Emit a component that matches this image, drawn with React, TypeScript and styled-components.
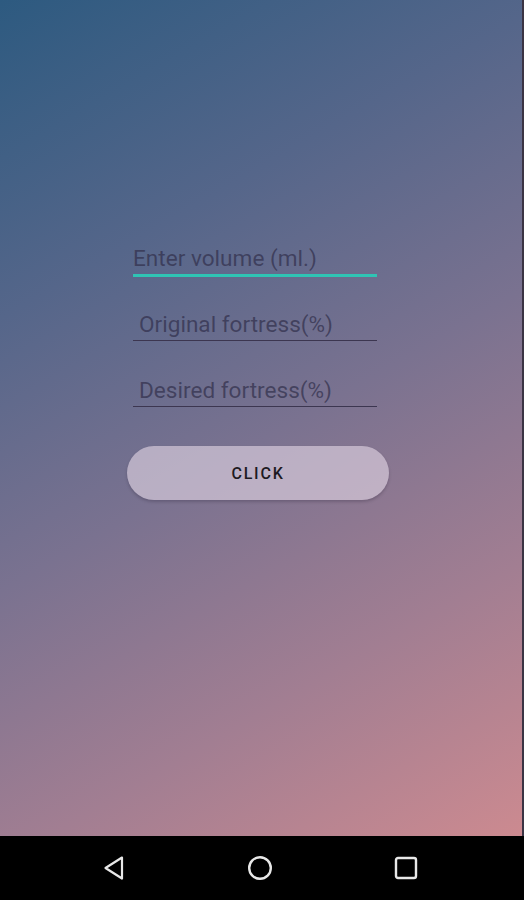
import React from "react";
import styled, { createGlobalStyle } from "styled-components";

const GlobalStyle = createGlobalStyle`
  html, body {
    margin: 0;
    padding: 0;
    height: 100%;
  }
  body {
    font-family: Roboto, "Liberation Sans", sans-serif;
    background: #000;
  }
  #root {
    height: 100%;
  }
`;

const Screen = styled.div`
  width: 524px;
  height: 900px;
  display: flex;
  flex-direction: column;
  overflow: hidden;
`;

const Content = styled.div`
  flex: 1;
  display: flex;
  flex-direction: column;
  align-items: center;
  padding-top: 244px;
  padding-right: 12px;
  background: linear-gradient(
    150deg,
    #2d5a80 0%,
    #55668a 28%,
    #7a7290 52%,
    #a27e92 76%,
    #cc8a90 100%
  );
  border-right: 2px solid #3b3444;
`;

const Form = styled.div`
  width: 244px;
  display: flex;
  flex-direction: column;
`;

const Field = styled.div<{ focused?: boolean }>`
  height: 33px;
  margin-bottom: ${(p) => (p.focused ? 31 : 33)}px;
  display: flex;
  align-items: flex-end;
  border-bottom: ${(p) => (p.focused ? "3px solid #2fc4b4" : "1.5px solid #3c3650")};
  box-sizing: border-box;
`;

const Placeholder = styled.span<{ indent?: number }>`
  font-size: 22.6px;
  line-height: 26px;
  padding-left: ${(p) => p.indent ?? 0}px;
  padding-bottom: 2px;
  color: rgba(50, 48, 76, 0.72);
`;

const ButtonRow = styled.div`
  display: flex;
  justify-content: center;
  margin-top: 6px;
  margin-left: 6px;
`;

const ClickButton = styled.button`
  width: 262px;
  height: 54px;
  border: none;
  border-radius: 27px;
  background: rgba(222, 210, 226, 0.64);
  box-shadow: 0 2px 3px rgba(40, 30, 50, 0.25);
  font-family: Roboto, "Liberation Sans", sans-serif;
  font-size: 16px;
  font-weight: 500;
  letter-spacing: 1.8px;
  color: #1d1a22;
  cursor: pointer;
`;

const NavBar = styled.div`
  height: 64px;
  padding-right: 4px;
  background: #000;
  display: flex;
  align-items: center;
  justify-content: center;
`;

const NavSlot = styled.div`
  width: 146px;
  display: flex;
  justify-content: center;
`;

const App: React.FC = () => {
  return (
    <Screen>
      <GlobalStyle />
      <Content>
        <Form>
          <Field focused>
            <Placeholder>Enter volume (ml.)</Placeholder>
          </Field>
          <Field>
            <Placeholder indent={6}>Original fortress(%)</Placeholder>
          </Field>
          <Field>
            <Placeholder indent={6}>Desired fortress(%)</Placeholder>
          </Field>
        </Form>
        <ButtonRow>
          <ClickButton>CLICK</ClickButton>
        </ButtonRow>
      </Content>
      <NavBar>
        <NavSlot>
          <svg width="24" height="26" viewBox="0 0 24 26">
            <path d="M20 2.5 L3.5 13 L20 23.5 Z" fill="none" stroke="#e8e8e8" strokeWidth="2.2" strokeLinejoin="round" />
          </svg>
        </NavSlot>
        <NavSlot>
          <svg width="26" height="26" viewBox="0 0 26 26">
            <circle cx="13" cy="13" r="10.8" fill="none" stroke="#e8e8e8" strokeWidth="2.4" />
          </svg>
        </NavSlot>
        <NavSlot>
          <svg width="24" height="24" viewBox="0 0 24 24">
            <rect x="2" y="2" width="20" height="20" rx="2" fill="none" stroke="#e8e8e8" strokeWidth="2.4" />
          </svg>
        </NavSlot>
      </NavBar>
    </Screen>
  );
};

export default App;
